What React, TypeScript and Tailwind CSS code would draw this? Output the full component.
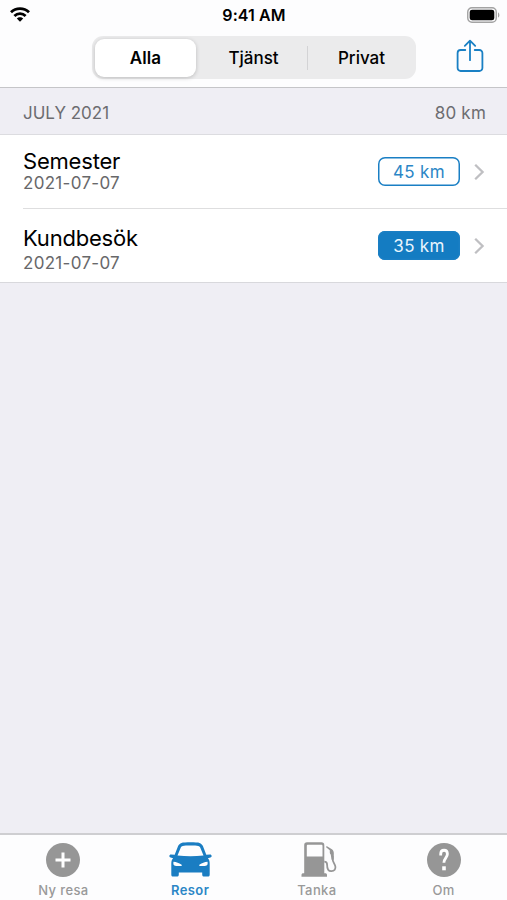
import React from 'react'
import clsx from 'clsx'

const trips = [
    { id: 1, title: 'Semester', date: '2021-07-07', distance: '45 km', business: false },
    { id: 2, title: 'Kundbesök', date: '2021-07-07', distance: '35 km', business: true },
]

const WifiIcon = () => (
    <svg width="20" height="15" viewBox="0 0 20 15" fill="none" stroke="#000" strokeWidth="2.8">
        <path d="M1 5.3C6 .4 14 .4 19 5.3" />
        <path d="M4.4 9c3.1-3.1 8.1-3.1 11.2 0" />
        <path d="M10 14.7 6.8 11.500c1.700-1.700 4.700-1.700 6.400 0z" fill="#000" stroke="none" />
    </svg>
)

const BatteryIcon = () => (
    <svg width="33" height="16" viewBox="0 0 33 16">
        <rect x=".75" y=".75" width="28.5" height="14.5" rx="4.2" fill="none" stroke="#a3a3a3" strokeWidth="1.4" />
        <rect x="2.7" y="2.7" width="24.6" height="10.6" rx="2.4" fill="#000" />
        <path d="M31 5.4c1.8.6 1.8 4.6 0 5.2z" fill="#a3a3a3" />
    </svg>
)

const ShareIcon = () => (
    <svg width="28" height="34" viewBox="0 0 28 34" fill="none" stroke="#1a80c4" strokeWidth="1.8" strokeLinecap="round" strokeLinejoin="round">
        <path d="M9.3 11H4.6A3 3 0 0 0 1.6 14v15a3 3 0 0 0 3 3h18.8a3 3 0 0 0 3-3V14a3 3 0 0 0-3-3h-4.7" />
        <path d="M14 21.2V2M8.8 6.9 14 1.7l5.2 5.2" />
    </svg>
)

const ChevronIcon = () => (
    <svg width="11" height="18" viewBox="0 0 11 18" fill="none" stroke="#bfbfc2" strokeWidth="2.3">
        <path d="m1.2 1.7 7.4 7.3-7.4 7.3" />
    </svg>
)

const PlusIcon = () => (
    <svg width="34" height="34" viewBox="0 0 34 34">
        <circle cx="17" cy="17" r="17" fill="#969696" />
        <path d="M17 9.5v15M9.5 17h15" stroke="#fff" strokeWidth="3" />
    </svg>
)

const CarIcon = () => (
    <svg width="43" height="35" viewBox="0 0 43 35" fill="#1a7dc2">
        <path
            fillRule="evenodd"
            d="M12.5.9C15 .1 28 .1 30.500.9c1.600.5 2.600 1.500 3.400 3.200L37.300 12.700l3.700-.2c2 0 2.200 2.400.4 2.900L38.800 16.200c1.400 1.400 1.900 3.100 1.900 5.200v11c0 1.600-.7 2.200-2.200 2.200h-3c-1.500 0-2.300-.6-2.300-2.200v-1.900H9.800v1.900c0 1.600-.8 2.200-2.300 2.200h-3c-1.500 0-2.200-.6-2.200-2.200v-11c0-2.100.5-3.800 1.900-5.200l-2.600-.8c-1.800-.5-1.600-2.900.4-2.900l3.700.2L9.100 4.100C9.900 2.400 10.900 1.400 12.500.9ZM13.800 3.900c-1 .2-1.600.8-2 1.700L8.500 13.500c8.700 1 17.300 1 26 0L31.200 5.600c-.4-.9-1-1.500-2-1.700-2.500-.5-12.900-.5-15.400 0ZM4.500 19.800c-.5 3 .2 4.300 2.900 4.300h4.500c1.200 0 1.400-1 .4-1.700-2.300-1.400-4.800-2.300-7.800-2.600Zm34 0c.5 3-.2 4.300-2.900 4.300h-4.500c-1.200 0-1.400-1-.4-1.700 2.300-1.400 4.800-2.300 7.800-2.600Z"
        />
    </svg>
)

const PumpIcon = () => (
    <svg className="ml-[6px]" width="37" height="35" viewBox="0 0 37 35">
        <path
            fill="#969696"
            fillRule="evenodd"
            d="M6 .3h14.500c1.800 0 2.800 1 2.800 2.800v28.100h.7c1.500 0 2 .6 2 1.900v1.600H.5v-1.600c0-1.300.6-1.900 2-1.900h.7V3.100C3.200 1.300 4.200.3 6 .3Zm1 2.500c-.8 0-1.200.4-1.200 1.100v10.700h15.700V3.900c0-.7-.4-1.100-1.200-1.100Z"
        />
        <path
            d="M23.300 19.700c1.900 0 2.800 1 2.800 3 0 4.700 1.400 6.600 4.300 6.500 3-.1 4.600-2.200 3.900-5.100-.6-2.400-2.700-4.200-2.700-7.100v-3"
            fill="none"
            stroke="#969696"
            strokeWidth="1.800"
        />
        <path d="m25.600 4 5.300 3.300c1.300.9 1.900 2.200 1.900 3.800v6.700h-2.100l-1-5.300c-.6-.4-.9-1-.9-1.900V8.200l-3.700-2.900Z" fill="#969696" />
    </svg>
)

const HelpIcon = () => (
    <svg width="34" height="34" viewBox="0 0 34 34">
        <circle cx="17" cy="17" r="17" fill="#969696" />
        <path d="M13.700 12.500V11c0-5 6.700-5 6.700 0 0 3.600-3.500 4.200-3.500 8.800" fill="none" stroke="#fff" strokeWidth="2.800" />
        <rect x="15.200" y="23.300" width="3.600" height="4" fill="#fff" />
    </svg>
)

const tabs = [
    { label: 'Ny resa', icon: <PlusIcon />, active: false },
    { label: 'Resor', icon: <CarIcon />, active: true },
    { label: 'Tanka', icon: <PumpIcon />, active: false },
    { label: 'Om', icon: <HelpIcon />, active: false },
]

const App = () => {
    return (
        <div className="flex h-[900px] w-[507px] flex-col overflow-hidden bg-[#efeef4] font-['Inter','Liberation_Sans',sans-serif] text-black">
            <header className="h-[88px] shrink-0 border-b border-[#c5c5c8] bg-[#fdfdfe]">
                <div className="grid h-[29px] grid-cols-3 items-center pl-2.5 pr-[7px]">
                    <WifiIcon />
                    <span className="pr-0.5 text-center text-[16px] font-semibold leading-5 tracking-[0.1px]">9:41 AM</span>
                    <div className="flex justify-end"><BatteryIcon /></div>
                </div>
                <div className="flex pl-[92px] pt-[7px]">
                    <div className="flex h-[43px] w-[324px] items-center rounded-[11px] bg-[#ebebec] p-[3px] text-[17px] font-medium">
                        <button className="h-[38px] w-[101px] rounded-[9px] bg-white pt-0.5 font-semibold tracking-[0.1px] shadow-[0_1px_4px_rgba(0,0,0,0.2)]">Alla</button>
                        <button className="h-[38px] w-[111px] pl-1 pt-0.5">Tjänst</button>
                        <span className="h-6 w-px bg-[#d3d3d5]" />
                        <button className="h-[38px] flex-1 pl-0.5 pt-0.5">Privat</button>
                    </div>
                    <button className="ml-[39.5px] mt-[3px] h-[34px]"><ShareIcon /></button>
                </div>
            </header>

            <main className="flex-1">
                <div className="flex h-[47px] items-center justify-between border-b border-[#dcdce0] pt-[5px] pl-[23px] pr-[21px] text-[17px] text-[#6c6c70]">
                    <h2 className="pt-px">JULY 2021</h2>
                    <span className="pt-px tracking-[0.2px]">80 km</span>
                </div>
                <ul className="border-b border-[#d8d8dc] bg-white pl-[23px]">
                    {trips.map((trip, index) => (
                        <li key={trip.id} className={clsx('flex pr-[22px]', index > 0 ? 'h-[73px]' : 'h-[74px] border-b border-[#dededf]')}>
                            <div className={clsx('flex flex-1 flex-col', index > 0 ? 'gap-[3px] pt-4' : 'pt-[13px]')}>
                                <span className="text-[22px] leading-[26px] tracking-[-0.2px]">{trip.title}</span>
                                <span className="text-[17px] leading-[19px] tracking-[0.3px] text-[#68686a]">{trip.date}</span>
                            </div>
                            <div className="flex items-center gap-[14px]">
                                <span
                                    className={clsx(
                                        'flex h-[29px] w-[82px] items-center justify-center rounded-[7px] pt-0.5 text-[17px] tracking-[0.3px] shadow-[inset_0_0_0_1.5px_#1a7fc4]',
                                        trip.business ? 'bg-[#147cc2] text-[#e9f5fd]' : 'text-[#2b86c6]'
                                    )}
                                >
                                    {trip.distance}
                                </span>
                                <ChevronIcon />
                            </div>
                        </li>
                    ))}
                </ul>
            </main>

            <nav className="grid h-[67px] shrink-0 grid-cols-4 border-t-2 border-[#ceced1] bg-[#fdfdfe]">
                {tabs.map((tab) => (
                    <button
                        key={tab.label}
                        className={clsx(
                            'flex flex-col items-center pt-[7px] text-[13px] tracking-[0.4px]',
                            tab.active ? 'font-semibold text-[#2b86c6]' : 'font-medium text-[#999]'
                        )}
                    >
                        <span className="flex h-[35px] items-center">{tab.icon}</span>
                        <span className="mt-1 leading-[18px]">{tab.label}</span>
                    </button>
                ))}
            </nav>
        </div>
    )
}

export default App
